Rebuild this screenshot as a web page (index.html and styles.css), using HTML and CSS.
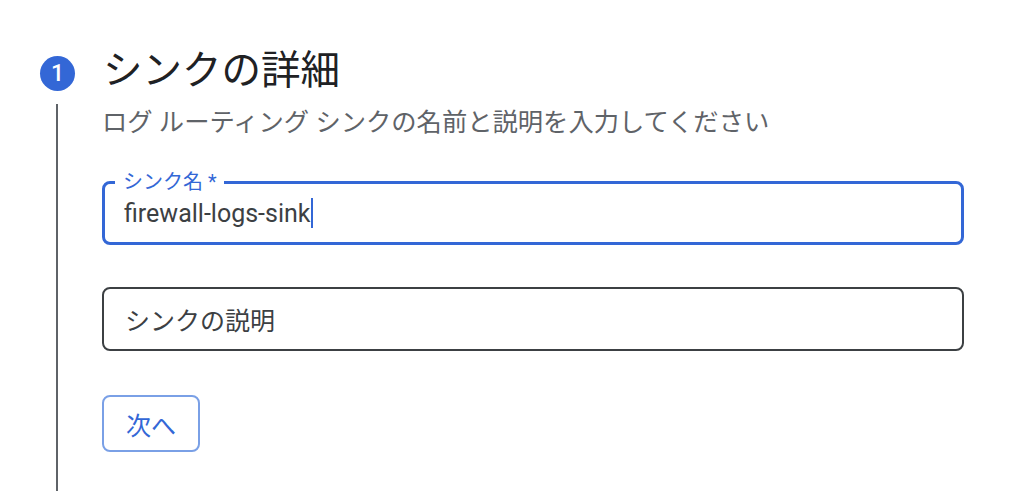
FILE: index.html
```html
<!DOCTYPE html>
<html lang="ja">
<head>
<meta charset="utf-8">
<link rel="stylesheet" href="styles.css">
</head>
<body>
<div class="step">
  <div class="step-head">
    <div class="badge">1</div>
    <h1 class="title">シンクの詳細</h1>
  </div>
  <div class="step-body">
    <p class="subtitle">ログ ルーティング シンクの名前と説明を入力してください</p>
    <div class="field focused">
      <span class="label">シンク名 *</span>
      <span class="value">firewall-logs-sink</span><span class="caret"></span>
    </div>
    <div class="field">
      <span class="placeholder">シンクの説明</span>
    </div>
    <button class="next">次へ</button>
  </div>
</div>
</body>
</html>
```

FILE: styles.css
```css
* { box-sizing: border-box; }
html, body { margin: 0; padding: 0; background: #fff; }
body {
  font-family: Roboto, "Noto Sans CJK JP", "Noto Sans", sans-serif;
  color: #202124;
  height: 491px;
  overflow: hidden;
}
.step { padding-top: 42px; }
.step-head {
  display: flex;
  align-items: center;
  padding-left: 40px;
  height: 58px;
}
.badge {
  width: 35px;
  height: 35px;
  border-radius: 50%;
  background: #3367d6;
  color: #fff;
  font-size: 23px;
  font-weight: 500;
  display: flex;
  align-items: center;
  justify-content: center;
  margin-top: 4px;
}
.title {
  margin: 0 0 0 28px;
  font-size: 39.5px;
  font-weight: 400;
  line-height: 50px;
  color: #202124;
}
.step-body {
  margin-left: 56px;
  margin-top: 4px;
  border-left: 2px solid #5f6368;
  padding-left: 44px;
  height: 400px;
}
.subtitle {
  margin: 0;
  padding-top: 1px;
  font-size: 25.3px;
  line-height: 36px;
  color: #5f6368;
}
.field {
  position: relative;
  width: 862px;
  height: 64px;
  border: 2px solid #3c4043;
  border-radius: 8px;
  display: flex;
  align-items: center;
  padding-left: 21px;
  font-size: 25px;
  color: #3c4043;
  margin-top: 42px;
}
.field.focused {
  border: 3px solid #3367d6;
  margin-top: 40px;
  height: 64px;
  padding-left: 19px;
  color: #202124;
}
.label {
  position: absolute;
  top: -15px;
  left: 10px;
  padding: 0 7px 0 8px;
  background: #fff;
  color: #3367d6;
  font-size: 20px;
  line-height: 26px;
}
.value { color: #3c4043; }
.caret {
  display: inline-block;
  width: 2px;
  height: 30px;
  background: #3367d6;
  margin-left: 1px;
}
.next {
  display: block;
  margin-top: 44px;
  width: 98px;
  height: 57px;
  border: 2px solid #7aa0e6;
  border-radius: 8px;
  background: #fff;
  color: #3367d6;
  font-family: Roboto, "Noto Sans CJK JP", sans-serif;
  font-size: 25px;
  padding: 0;
}
```
